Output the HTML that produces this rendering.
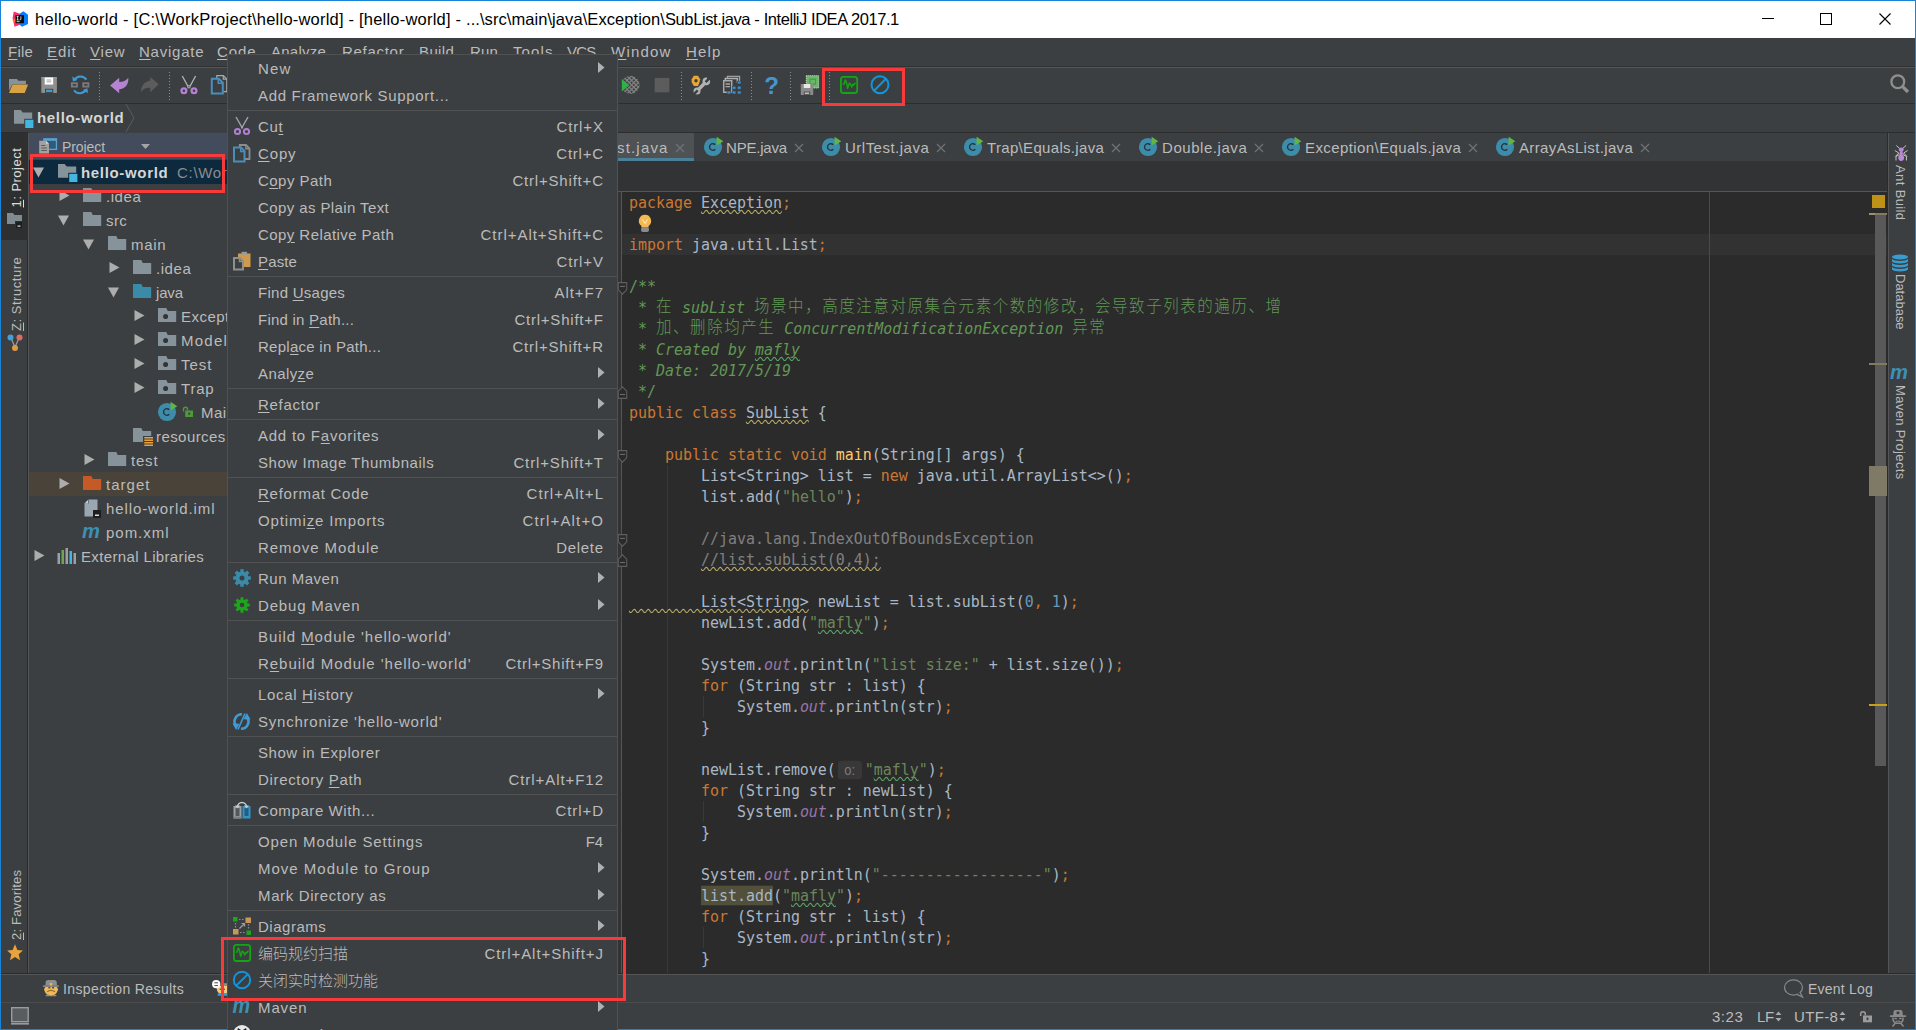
<!DOCTYPE html>
<html lang="zh"><head><meta charset="utf-8"><title>hello-world - IntelliJ IDEA</title><style>
html,body{margin:0;padding:0;background:#3c3f41;overflow:hidden}
#root{position:relative;width:1916px;height:1030px;overflow:hidden;font-family:"Liberation Sans","Noto Sans CJK SC",sans-serif;font-size:15px;color:#bbbbbb}
.t{position:absolute;white-space:pre;font-size:15px;color:#bbbbbb}
.t u{text-decoration:underline;text-underline-offset:2px;text-decoration-thickness:1px}
.title{color:#000;font-size:16.5px}
.b{font-weight:bold;color:#d6d6d6}
.s14{font-size:14px}
.vt{font-size:13px}
.cl{position:absolute;left:11px;height:21px;line-height:21px;white-space:pre;transform:scaleY(1.09);transform-origin:0 15.67px;font-family:"DejaVu Sans Mono","Liberation Mono","Noto Sans CJK SC",monospace;font-size:14.95px;color:#a9b7c6}
.k{color:#cc7832} .s{color:#6a8759} .c{color:#808080} .d{color:#629755} .i{font-style:italic} .n{color:#6897bb} .f{color:#9876aa;font-style:italic} .m{color:#ffc66d}
.z{color:#629755;font-family:"Noto Sans CJK SC",sans-serif;font-size:15.5px;letter-spacing:1.55px;line-height:0;font-weight:300;position:relative;top:-1px}
.w{text-decoration:underline wavy;text-decoration-thickness:1.2px;text-underline-offset:0.5px;text-decoration-skip-ink:none}
.hint{display:inline-block;background:#383838;color:#7a7a7a;font-family:"Liberation Sans","Noto Sans CJK SC",sans-serif;font-size:13px;height:17px;line-height:17px;padding:0 6.5px;margin:0 3px 0 2px;border-radius:3px;vertical-align:0px}
</style></head><body><div id="root">
<div style="position:absolute;left:0px;top:0px;width:1916px;height:1030px;background:#1883d7;"></div>
<div style="position:absolute;left:1px;top:1px;width:1914px;height:37px;background:#ffffff;"></div>
<svg style="position:absolute;left:11px;top:10px" width="18" height="18" viewBox="11 10 18 18"><path d="M13.800 11.600L20.600 14L20.600 24.500L14.500 26.700L12.600 18Z" fill="#fc2d6f"/><path d="M23.400 11.300L28 14.800L28 24.100L22.100 26.700L19.900 25L19.900 13.500Z" fill="#087cfa"/><path d="M12.200 20.400L15.700 18.300L15.700 22.700Z" fill="#fc801d"/><rect x="15.500" y="15.100" width="8.500" height="8.100" fill="#0a0a0a"/><path d="M16.700 16.300h1.900M17.650 16.300v3.600M16.700 19.900h1.900" stroke="#fff" stroke-width="0.800" fill="none"/><path d="M20.900 16.300v2.700q0 1-1.300 0.900" stroke="#fff" stroke-width="0.800" fill="none"/><rect x="16.600" y="21.300" width="3" height="0.800" fill="#fff"/></svg>
<span class="t title" style="top:7.5px;height:22px;line-height:22px;left:35px;letter-spacing:0.307px;">hello-world - </span>
<span class="t title" style="top:7.5px;height:22px;line-height:22px;left:133.6px;letter-spacing:0.215px;">[C:\WorkProject\hello-world] - </span>
<span class="t title" style="top:7.5px;height:22px;line-height:22px;left:359px;letter-spacing:0.218px;">[hello-world] - </span>
<span class="t title" style="top:7.5px;height:22px;line-height:22px;left:466px;letter-spacing:0.066px;">...\src\main\java\Exception\</span>
<span class="t title" style="top:7.5px;height:22px;line-height:22px;left:665px;letter-spacing:-0.404px;">SubList.java - </span>
<span class="t title" style="top:7.5px;height:22px;line-height:22px;left:763.7px;letter-spacing:-0.447px;">IntelliJ IDEA 2017.1</span>
<svg style="position:absolute;left:1740px;top:1px" width="175" height="37" viewBox="0 0 175 37"><path d="M22 17.5h12" stroke="#000" stroke-width="1" fill="none"/><rect x="80.5" y="12.5" width="11" height="11" stroke="#000" stroke-width="1" fill="none"/><path d="M139.5 12.5l11 11M150.5 12.5l-11 11" stroke="#000" stroke-width="1.1" fill="none"/></svg>
<div style="position:absolute;left:1px;top:38px;width:1914px;height:991px;background:#3c3f41;"></div>
<span class="t " style="top:42.0px;height:20px;line-height:20px;left:8px;letter-spacing:0.232px;"><u>F</u>ile</span>
<span class="t " style="top:42.0px;height:20px;line-height:20px;left:47px;letter-spacing:0.897px;"><u>E</u>dit</span>
<span class="t " style="top:42.0px;height:20px;line-height:20px;left:90px;letter-spacing:0.786px;"><u>V</u>iew</span>
<span class="t " style="top:42.0px;height:20px;line-height:20px;left:139px;letter-spacing:0.771px;"><u>N</u>avigate</span>
<span class="t " style="top:42.0px;height:20px;line-height:20px;left:217px;letter-spacing:0.893px;"><u>C</u>ode</span>
<span class="t " style="top:42.0px;height:20px;line-height:20px;left:271px;letter-spacing:0.250px;">Analy<u>z</u>e</span>
<span class="t " style="top:42.0px;height:20px;line-height:20px;left:342px;letter-spacing:0.706px;"><u>R</u>efactor</span>
<span class="t " style="top:42.0px;height:20px;line-height:20px;left:419px;letter-spacing:0.361px;"><u>B</u>uild</span>
<span class="t " style="top:42.0px;height:20px;line-height:20px;left:470px;letter-spacing:0.188px;">R<u>u</u>n</span>
<span class="t " style="top:42.0px;height:20px;line-height:20px;left:513px;letter-spacing:1.104px;"><u>T</u>ools</span>
<span class="t " style="top:42.0px;height:20px;line-height:20px;left:567px;letter-spacing:-0.744px;">VC<u>S</u></span>
<span class="t " style="top:42.0px;height:20px;line-height:20px;left:611px;letter-spacing:1.205px;"><u>W</u>indow</span>
<span class="t " style="top:42.0px;height:20px;line-height:20px;left:686px;letter-spacing:1.179px;"><u>H</u>elp</span>
<div style="position:absolute;left:1px;top:66px;width:1914px;height:1px;background:#323232;"></div>
<div style="position:absolute;left:1px;top:67px;width:1914px;height:1px;background:#555555;"></div>
<svg style="position:absolute;left:8px;top:74px" width="22" height="22" viewBox="8 74 22 22"><path d="M9 79h8.100l1.100 1.800h7.700v3.500h-13.600l-3.300 6.500z" fill="#87939a"/><path d="M12.500 84.600h15.600l-3.400 8.400h-15.700z" fill="#d9a343"/></svg>
<svg style="position:absolute;left:38px;top:74px" width="22" height="22" viewBox="38 74 22 22"><rect x="41.300" y="77.300" width="15.600" height="15.600" fill="#8f8f8f"/><rect x="41.300" y="77.300" width="15.600" height="1" fill="#a5a5a5"/><rect x="44.700" y="77.500" width="8.500" height="7.100" fill="#ffffff"/><path d="M46.600 80h4.600M46.600 81.800h4.600" stroke="#9a9a9a" stroke-width="0.900"/><rect x="45" y="88.800" width="8.200" height="4.100" fill="#3c3f41"/><rect x="45.900" y="89.600" width="6.400" height="2.500" fill="#3f9ad6"/></svg>
<svg style="position:absolute;left:68px;top:73px" width="24" height="24" viewBox="68 73 24 24"><path d="M74.200 80.200a7.200 7.200 0 0 1 12.200 -0.600" stroke="#3f9ad6" stroke-width="2" fill="none"/><path d="M86.200 89.600a7.200 7.200 0 0 1 -12.200 0.600" stroke="#3f9ad6" stroke-width="2" fill="none"/><path d="M72.300 76.500l0.600 5l4.600-1.600z" fill="#3f9ad6"/><path d="M88 93.300l-0.600-5l-4.600 1.600z" fill="#3f9ad6"/><rect x="70.900" y="82.300" width="7" height="5.200" fill="#7b7b7b"/><rect x="82.300" y="82.300" width="7" height="5.200" fill="#7b7b7b"/><rect x="72.800" y="84.100" width="3.300" height="1.600" fill="#3c3f41"/><rect x="84.200" y="84.100" width="3.300" height="1.600" fill="#3c3f41"/></svg>
<div style="position:absolute;left:99px;top:72px;width:1px;height:28px;background:repeating-linear-gradient(to bottom,#8d8d8d 0,#8d8d8d 1px,transparent 1px,transparent 3px)"></div>
<svg style="position:absolute;left:108px;top:74px" width="24" height="22" viewBox="108 74 24 22"><path d="M110.100 85.500L119.200 77.700L119.200 82.100C123 82 126.500 80.500 128.300 77.700C128.900 84.200 125 89 119.200 89.300L119.200 93.300Z" fill="#b584d1"/></svg>
<svg style="position:absolute;left:138px;top:74px" width="24" height="22" viewBox="138 74 24 22"><path d="M158.700 84.200L150.300 77L150.300 80.800C145 81 141 85.500 140.900 92.200C143 88.800 146 87.600 150.300 87.800L150.300 92.300Z" fill="#5c5c5c"/></svg>
<div style="position:absolute;left:169px;top:72px;width:1px;height:28px;background:repeating-linear-gradient(to bottom,#8d8d8d 0,#8d8d8d 1px,transparent 1px,transparent 3px)"></div>
<svg style="position:absolute;left:178px;top:73px" width="24" height="24" viewBox="178 73 24 24"><path d="M182.300 76l6 11M195.600 76l-6 11" stroke="#b4b4b4" stroke-width="1.300" fill="none"/><rect x="187.500" y="85.300" width="2.800" height="3" fill="#b4b4b4"/><rect x="188.300" y="86.200" width="1.200" height="1.200" fill="#3c3f41"/><circle cx="183.900" cy="90.700" r="2.400" fill="none" stroke="#b77fd6" stroke-width="2.300"/><circle cx="194" cy="90.700" r="2.400" fill="none" stroke="#b77fd6" stroke-width="2.300"/></svg>
<svg style="position:absolute;left:208px;top:73px" width="22" height="24" viewBox="208 73 22 24"><path d="M216.800 75.600h6.500l3.500 3.500v12.600h-10z" fill="#3c3f41" stroke="#a8a8a8" stroke-width="1.200"/><path d="M223.300 75.600v3.500h3.500" fill="none" stroke="#a8a8a8" stroke-width="1.200"/><path d="M211.800 78.700h7l4 4v10.800h-11z" fill="#3c3f41" stroke="#4a8ebd" stroke-width="2"/><path d="M218.300 78.700v4.500h4.500" fill="none" stroke="#4a8ebd" stroke-width="1.500"/></svg>
<svg style="position:absolute;left:620px;top:73px" width="22" height="24" viewBox="620 73 22 24"><defs><pattern id="hx" width="3.200" height="3.200" patternUnits="userSpaceOnUse" patternTransform="rotate(45 630 85)"><path d="M0 0.600h3.200M0.600 0v3.200" stroke="#858585" stroke-width="1.200"/></pattern></defs><circle cx="630.600" cy="84.900" r="9.100" fill="url(#hx)"/><path d="M621 78.200l9.800 7l-9.800 7z" fill="#3c3f41"/><path d="M621.800 79l7.700 6.200l-7.700 6.200z" fill="#2fb04a"/></svg>
<svg style="position:absolute;left:652px;top:74px" width="22" height="22" viewBox="652 74 22 22"><rect x="654.700" y="77.900" width="14.600" height="14.400" fill="#5c5c5c"/></svg>
<div style="position:absolute;left:681px;top:72px;width:1px;height:28px;background:repeating-linear-gradient(to bottom,#8d8d8d 0,#8d8d8d 1px,transparent 1px,transparent 3px)"></div>
<svg style="position:absolute;left:690px;top:73px" width="22" height="24" viewBox="690 73 22 24"><path d="M697.200 90.800l9-9" stroke="#b2b2b2" stroke-width="3.400" fill="none"/><circle cx="706.300" cy="81.400" r="3.800" fill="#b2b2b2"/><path d="M706.300 81.400l1.300-1.300l3.500 0l0-3.500l-3.500 0z" fill="#3c3f41" transform="rotate(0 706.300 81.400)"/><path d="M705.600 82.100l5.500-5.500" stroke="#3c3f41" stroke-width="2.600"/><circle cx="697" cy="91" r="3.500" fill="#b2b2b2"/><path d="M697.700 90.300l-5.500 5.500" stroke="#3c3f41" stroke-width="2.400"/><path d="M693.800 75.700h4.200l2.100 3.600l-0.700 3.500l-1.400 3.100h-4.200l-2.100-3.600l0-3z" fill="#e8a634"/><circle cx="696" cy="80.800" r="1.700" fill="#3c3f41"/></svg>
<svg style="position:absolute;left:721px;top:73px" width="22" height="24" viewBox="721 73 22 24"><path d="M727.500 78v-1.600h12v6" fill="none" stroke="#a0a0a0" stroke-width="1.400"/><path d="M725.300 80v-1.500h12v4" fill="none" stroke="#b0b0b0" stroke-width="1.400"/><path d="M723.700 80.700h8v11.600h-8z" fill="#3c3f41" stroke="#a8a8a8" stroke-width="1.500"/><path d="M725.500 84h4.500M725.500 86.600h4.500" stroke="#a8a8a8" stroke-width="1.300"/><g fill="#3592d6" stroke="#3c3f41" stroke-width="0.600"><rect x="737.300" y="81.100" width="3.700" height="2.800"/><rect x="732.200" y="86.200" width="3.700" height="3"/><rect x="737.300" y="86.200" width="3.700" height="3"/><rect x="727.100" y="91" width="3.700" height="3"/><rect x="732.200" y="91" width="3.700" height="3"/><rect x="737.300" y="91" width="3.700" height="3"/></g></svg>
<div style="position:absolute;left:751px;top:72px;width:1px;height:28px;background:repeating-linear-gradient(to bottom,#8d8d8d 0,#8d8d8d 1px,transparent 1px,transparent 3px)"></div>
<svg style="position:absolute;left:760px;top:72px" width="22" height="26" viewBox="760 72 22 26"><text x="771.600" y="94.100" text-anchor="middle" font-family="Liberation Sans,sans-serif" font-weight="bold" font-size="24" fill="#4596cf">?</text></svg>
<div style="position:absolute;left:790px;top:72px;width:1px;height:28px;background:repeating-linear-gradient(to bottom,#8d8d8d 0,#8d8d8d 1px,transparent 1px,transparent 3px)"></div>
<svg style="position:absolute;left:799px;top:73px" width="22" height="24" viewBox="799 73 22 24"><rect x="806.300" y="75.700" width="12.300" height="12.300" fill="#6ab868" stroke="#d8e8d0" stroke-width="1" stroke-dasharray="1 1"/><rect x="810" y="79.200" width="5.500" height="5" fill="none" stroke="#4a9a4a" stroke-width="1.200"/><rect x="800.800" y="84" width="12.400" height="11" fill="#8a8a8a"/><rect x="803.800" y="84" width="6.500" height="4" fill="#e8e8e8"/><rect x="803.800" y="91.500" width="6.500" height="3.500" fill="#5a5a5a"/><rect x="805" y="92.600" width="4" height="1.300" fill="#d0d0d0"/></svg>
<div style="position:absolute;left:829px;top:72px;width:1px;height:28px;background:repeating-linear-gradient(to bottom,#8d8d8d 0,#8d8d8d 1px,transparent 1px,transparent 3px)"></div>
<svg style="position:absolute;left:838px;top:74px" width="22" height="22" viewBox="838 74 22 22"><rect x="840.900" y="76.900" width="16.300" height="16.100" rx="2.600" fill="none" stroke="#14a514" stroke-width="1.800"/><path d="M842.800 84.200l1.300-0.200l1.100-4l1.100 1.800l1.400 6.600l1.600-5.300l1.200 1.200l1.200 2.700l1-2.400l1.200 0.300l0.800-1.500h1" fill="none" stroke="#14a514" stroke-width="1.500" stroke-linejoin="round"/></svg>
<svg style="position:absolute;left:868px;top:73px" width="24" height="24" viewBox="868 73 24 24"><circle cx="880" cy="84.800" r="8.500" fill="none" stroke="#1296db" stroke-width="2"/><path d="M874 90.800l12-12" stroke="#1296db" stroke-width="2"/></svg>
<svg style="position:absolute;left:1886px;top:70px" width="26" height="26" viewBox="1886 70 26 26"><circle cx="1897.800" cy="81.700" r="6.400" fill="none" stroke="#8f8f8f" stroke-width="2.300"/><path d="M1902.600 86.600l5.400 5.400" stroke="#8f8f8f" stroke-width="3.200" stroke-linecap="butt"/></svg>
<div style="position:absolute;left:1px;top:103px;width:1914px;height:1px;background:#2d2d2d;"></div>
<div style="position:absolute;left:822px;top:68px;width:77px;height:32px;border:3px solid #f93a3a"></div>
<svg style="position:absolute;left:14px;top:110px" width="20" height="18" viewBox="0 0 20 18"><path d="M0 0h6.700l2 2.400h9.500v11.400h-18.200z" fill="#87939a"/><rect x="10.200" y="8.800" width="9.800" height="9.200" fill="#3c3f41"/><rect x="11.200" y="9.800" width="8.200" height="8.200" fill="#40b6e0"/></svg>
<span class="t b" style="top:108.0px;height:20px;line-height:20px;left:37px;letter-spacing:0.667px;">hello-world</span>
<svg style="position:absolute;left:125px;top:104px" width="12" height="28" viewBox="0 0 12 28"><path d="M1 0l8 14l-8 14" stroke="#5a5d5f" fill="none" stroke-width="1"/></svg>
<div style="position:absolute;left:1px;top:132px;width:1914px;height:1px;background:#2d2d2d;"></div>
<div style="position:absolute;left:1px;top:133px;width:27px;height:842px;background:#3c3f41;"></div>
<div style="position:absolute;left:27px;top:133px;width:1px;height:841px;background:#2b2b2b;"></div>
<div style="position:absolute;left:28px;top:133px;width:1px;height:841px;background:#555555;"></div>
<div style="position:absolute;left:1px;top:133px;width:27px;height:107px;background:#2d2f30;"></div>
<span class="t vt" style="left:7px;top:147.5px;height:20px;line-height:20px;transform:rotate(-90deg) translate(-59.5px,0);transform-origin:0 0;color:#dddddd;letter-spacing:0.482px;"><u>1</u>: Project</span>
<svg style="position:absolute;left:7px;top:212px" width="16" height="16" viewBox="0 0 16 16"><path d="M0 1h6l1.5 2h7.5v9h-15z" fill="#7f8b91"/><rect x="8" y="9" width="7" height="7" fill="#2d2f30"/><rect x="9" y="10" width="6" height="6" fill="#1e1e1e"/><rect x="10.5" y="13.5" width="3" height="1.2" fill="#ddd"/></svg>
<span class="t vt" style="left:7px;top:257px;height:20px;line-height:20px;transform:rotate(-90deg) translate(-74px,0);transform-origin:0 0;color:#bbbbbb;letter-spacing:0.529px;"><u>Z</u>: Structure</span>
<svg style="position:absolute;left:7px;top:334px" width="16" height="18" viewBox="0 0 16 18"><path d="M4 4l3.5 8M12 4l-3.5 8" stroke="#9aa0a4" stroke-width="1.2"/><circle cx="3.5" cy="3.5" r="3" fill="#40a0d8"/><circle cx="12.5" cy="3.5" r="3" fill="#e06c60"/><circle cx="8" cy="14" r="3" fill="#e09a40"/></svg>
<span class="t vt" style="left:7px;top:870px;height:20px;line-height:20px;transform:rotate(-90deg) translate(-70px,0);transform-origin:0 0;color:#bbbbbb;letter-spacing:0.181px;"><u>2</u>: Favorites</span>
<svg style="position:absolute;left:7px;top:944px" width="16" height="17" viewBox="0 0 16 17"><path d="M8 0.300l2.400 5.600l5.500 0.500l-4.200 3.900l1.300 5.900l-5-3.200l-5 3.200l1.300-5.900l-4.200-3.900l5.500-0.500z" fill="#e8a33d"/></svg>
<div style="position:absolute;left:29px;top:132px;width:199px;height:1px;background:#3e4143;"></div>
<div style="position:absolute;left:29px;top:133px;width:199px;height:26px;background:#434c5c;"></div>
<div style="position:absolute;left:29px;top:159px;width:199px;height:1px;background:#35404d;"></div>
<svg style="position:absolute;left:39px;top:138px" width="19" height="16" viewBox="0 0 19 16"><rect x="4.200" y="0.200" width="13.900" height="11.800" fill="#5ba3d0"/><rect x="5.500" y="2.800" width="11.300" height="7.900" fill="#2f5a78"/><path d="M0.200 2.800h6.800l3 3v9.600h-9.800z" fill="#a2a2a2"/><path d="M7 2.800v3h3z" fill="#d0d0d0"/><path d="M2.300 7.500h4M2.300 10h5.500M2.300 12.500h5.500" stroke="#5a5a5a" stroke-width="1.100"/></svg>
<span class="t s14" style="top:137.0px;height:20px;line-height:20px;left:62px;letter-spacing:-0.089px;">Project</span>
<svg style="position:absolute;left:141px;top:144px" width="10" height="6"><path d="M0 0h9l-4.5 5z" fill="#a5a5a5"/></svg>
<div style="position:absolute;left:29px;top:160px;width:199px;height:813px;background:#3c3f41;"></div>
<div style="position:absolute;left:29px;top:157px;width:198px;height:818px;overflow:hidden">
<div style="position:absolute;left:0px;top:3px;width:199px;height:24px;background:#0d293e;"></div>
<svg style="position:absolute;left:4px;top:10px" width="12" height="11"><path d="M0 0.5h11l-5.5 10z" fill="#adadad"/></svg>
<svg style="position:absolute;left:29px;top:7px" width="20" height="18" viewBox="0 0 20 18"><path d="M0 0h6.700l2 2.400h9.500v11.400h-18.200z" fill="#87939a"/><rect x="10.200" y="8.800" width="9.800" height="9.200" fill="#0d293e"/><rect x="11.200" y="9.800" width="8.200" height="8.200" fill="#40b6e0"/></svg>
<span class="t b" style="left:52px;top:6px;height:20px;line-height:20px;letter-spacing:0.667px;">hello-world</span>
<span class="t" style="left:148px;top:6px;height:20px;line-height:20px;color:#8c8c8c;letter-spacing:0.695px;">C:\WorkProject\hello-world</span>
<svg style="position:absolute;left:30px;top:33px" width="11" height="12"><path d="M0.5 0v11l10-5.5z" fill="#adadad"/></svg>
<svg style="position:absolute;left:54px;top:31px" width="19" height="15" viewBox="0 0 19 15"><path d="M0 0h8.300l1.400 3h8.500v11h-18.200z" fill="#87939a"/></svg>
<span class="t " style="left:77px;top:30px;height:20px;line-height:20px;letter-spacing:0.549px;">.idea</span>
<svg style="position:absolute;left:29px;top:58px" width="12" height="11"><path d="M0 0.5h11l-5.5 10z" fill="#adadad"/></svg>
<svg style="position:absolute;left:54px;top:55px" width="19" height="15" viewBox="0 0 19 15"><path d="M0 0h8.300l1.400 3h8.500v11h-18.200z" fill="#87939a"/></svg>
<span class="t " style="left:77px;top:54px;height:20px;line-height:20px;letter-spacing:0.400px;">src</span>
<svg style="position:absolute;left:54px;top:82px" width="12" height="11"><path d="M0 0.5h11l-5.5 10z" fill="#adadad"/></svg>
<svg style="position:absolute;left:79px;top:79px" width="19" height="15" viewBox="0 0 19 15"><path d="M0 0h8.300l1.400 3h8.500v11h-18.200z" fill="#87939a"/></svg>
<span class="t " style="left:102px;top:78px;height:20px;line-height:20px;letter-spacing:0.710px;">main</span>
<svg style="position:absolute;left:80px;top:105px" width="11" height="12"><path d="M0.5 0v11l10-5.5z" fill="#adadad"/></svg>
<svg style="position:absolute;left:104px;top:103px" width="19" height="15" viewBox="0 0 19 15"><path d="M0 0h8.300l1.400 3h8.500v11h-18.200z" fill="#87939a"/></svg>
<span class="t " style="left:127px;top:102px;height:20px;line-height:20px;letter-spacing:0.549px;">.idea</span>
<svg style="position:absolute;left:79px;top:130px" width="12" height="11"><path d="M0 0.5h11l-5.5 10z" fill="#adadad"/></svg>
<svg style="position:absolute;left:104px;top:127px" width="19" height="15" viewBox="0 0 19 15"><path d="M0 0h8.300l1.400 3h8.500v11h-18.200z" fill="#3a8ba8"/></svg>
<span class="t " style="left:127px;top:126px;height:20px;line-height:20px;letter-spacing:-0.152px;">java</span>
<svg style="position:absolute;left:105px;top:153px" width="11" height="12"><path d="M0.5 0v11l10-5.5z" fill="#adadad"/></svg>
<svg style="position:absolute;left:129px;top:151px" width="19" height="15" viewBox="0 0 19 15"><path d="M0 0h8.300l1.400 3h8.500v11h-18.200z" fill="#87939a"/><circle cx="7.600" cy="8.400" r="2.500" fill="#313435"/></svg>
<span class="t " style="left:152px;top:150px;height:20px;line-height:20px;letter-spacing:0.485px;">Exception</span>
<svg style="position:absolute;left:105px;top:177px" width="11" height="12"><path d="M0.5 0v11l10-5.5z" fill="#adadad"/></svg>
<svg style="position:absolute;left:129px;top:175px" width="19" height="15" viewBox="0 0 19 15"><path d="M0 0h8.300l1.400 3h8.500v11h-18.200z" fill="#87939a"/><circle cx="7.600" cy="8.400" r="2.500" fill="#313435"/></svg>
<span class="t " style="left:152px;top:174px;height:20px;line-height:20px;letter-spacing:1.253px;">Model</span>
<svg style="position:absolute;left:105px;top:201px" width="11" height="12"><path d="M0.5 0v11l10-5.5z" fill="#adadad"/></svg>
<svg style="position:absolute;left:129px;top:199px" width="19" height="15" viewBox="0 0 19 15"><path d="M0 0h8.300l1.400 3h8.500v11h-18.200z" fill="#87939a"/><circle cx="7.600" cy="8.400" r="2.500" fill="#313435"/></svg>
<span class="t " style="left:152px;top:198px;height:20px;line-height:20px;letter-spacing:0.996px;">Test</span>
<svg style="position:absolute;left:105px;top:225px" width="11" height="12"><path d="M0.5 0v11l10-5.5z" fill="#adadad"/></svg>
<svg style="position:absolute;left:129px;top:223px" width="19" height="15" viewBox="0 0 19 15"><path d="M0 0h8.300l1.400 3h8.500v11h-18.200z" fill="#87939a"/><circle cx="7.600" cy="8.400" r="2.500" fill="#313435"/></svg>
<span class="t " style="left:152px;top:222px;height:20px;line-height:20px;letter-spacing:0.772px;">Trap</span>
<svg style="position:absolute;left:128px;top:244px" width="21" height="21" viewBox="0 0 21 21"><circle cx="10" cy="11" r="9.100" fill="#3d8daa"/><path d="M12.300 8.800a3.300 3.300 0 1 0 0 4.400" fill="none" stroke="#22353f" stroke-width="1.350"/><path d="M13.600 0.800l0 8.700l6.700-4.200z" fill="#62b543"/></svg>
<svg style="position:absolute;left:153px;top:249px" width="12" height="12" viewBox="0 0 12 12"><path d="M1.500 5.500v-2.300a2 2 0 0 1 4 0v1.300" fill="none" stroke="#4e9a3b" stroke-width="1.400"/><rect x="3.200" y="4.500" width="7.800" height="6.500" fill="#4e9a3b"/><rect x="6.300" y="6.600" width="1.800" height="2.200" fill="#3c3f41"/></svg>
<span class="t " style="left:172px;top:246px;height:20px;line-height:20px;letter-spacing:0.424px;">Main</span>
<svg style="position:absolute;left:104px;top:271px" width="20" height="19" viewBox="0 0 20 19"><path d="M0 0h8.300l1.400 3h8.500v11h-18.200z" fill="#87939a"/><rect x="10" y="8" width="10" height="11" fill="#3c3f41"/><path d="M11.300 9.800h8.700M11.300 12.300h8.700M11.300 14.800h8.700M11.300 17.300h8.700" stroke="#e8a33d" stroke-width="1.400"/></svg>
<span class="t " style="left:127px;top:270px;height:20px;line-height:20px;letter-spacing:0.428px;">resources</span>
<svg style="position:absolute;left:55px;top:297px" width="11" height="12"><path d="M0.5 0v11l10-5.5z" fill="#adadad"/></svg>
<svg style="position:absolute;left:79px;top:295px" width="19" height="15" viewBox="0 0 19 15"><path d="M0 0h8.300l1.400 3h8.500v11h-18.200z" fill="#87939a"/></svg>
<span class="t " style="left:102px;top:294px;height:20px;line-height:20px;letter-spacing:0.804px;">test</span>
<div style="position:absolute;left:0px;top:315px;width:199px;height:24px;background:#4a4339;"></div>
<svg style="position:absolute;left:30px;top:321px" width="11" height="12"><path d="M0.5 0v11l10-5.5z" fill="#adadad"/></svg>
<svg style="position:absolute;left:54px;top:319px" width="19" height="15" viewBox="0 0 19 15"><path d="M0 0h8.300l1.400 3h8.500v11h-18.200z" fill="#c55a26"/></svg>
<span class="t " style="left:77px;top:318px;height:20px;line-height:20px;letter-spacing:1.026px;">target</span>
<svg style="position:absolute;left:54px;top:342px" width="19" height="19" viewBox="0 0 19 19"><path d="M5.5 0.5h9v17h-13v-13z" fill="#9aa7b0"/><path d="M5.5 0.5v4h-4z" fill="#3c3f41"/><path d="M5 1l-3.5 3.5h3.5z" fill="#c8ced2"/><rect x="10" y="11" width="8" height="8" fill="#1e1e1e"/><rect x="12" y="15.5" width="4" height="1.5" fill="#ddd"/></svg>
<span class="t " style="left:77px;top:342px;height:20px;line-height:20px;letter-spacing:0.906px;">hello-world.iml</span>
<svg style="position:absolute;left:53px;top:366px" width="19" height="18" viewBox="0 0 19 18"><text x="0" y="15" font-family="Liberation Sans,sans-serif" font-style="italic" font-weight="bold" font-size="21" fill="#3d8fb5" textLength="18" lengthAdjust="spacingAndGlyphs">m</text></svg>
<span class="t " style="left:77px;top:366px;height:20px;line-height:20px;letter-spacing:0.971px;">pom.xml</span>
<svg style="position:absolute;left:5px;top:393px" width="11" height="12"><path d="M0.5 0v11l10-5.5z" fill="#adadad"/></svg>
<svg style="position:absolute;left:28px;top:390px" width="20" height="18" viewBox="0 0 20 18"><rect x="0.5" y="6" width="2.5" height="11" fill="#9aa0a4"/><rect x="4.5" y="3" width="2.5" height="14" fill="#6aa84f"/><rect x="8.5" y="1" width="2.5" height="16" fill="#9aa0a4"/><rect x="12.5" y="4" width="2.5" height="13" fill="#40b6e0"/><rect x="16.5" y="6" width="2.5" height="11" fill="#9aa0a4"/></svg>
<span class="t " style="left:52px;top:390px;height:20px;line-height:20px;letter-spacing:0.359px;">External Libraries</span>
</div>
<div style="position:absolute;left:30px;top:154px;width:189px;height:33px;border:3px solid #f93a3a"></div>
<div style="position:absolute;left:618px;top:133px;width:1270px;height:28px;background:#3c3f41;"></div>
<div style="position:absolute;left:618px;top:133px;width:76px;height:28px;background:#4e5254;"></div>
<div style="position:absolute;left:618px;top:158px;width:76px;height:3px;background:#4a8199;"></div>
<span class="t " style="top:138.0px;height:20px;line-height:20px;left:603px;letter-spacing:1.173px;">List.java</span>
<svg style="position:absolute;left:675px;top:143px" width="10" height="10"><path d="M1 1l8 8M9 1l-8 8" stroke="#6f7375" stroke-width="1.200" fill="none"/></svg>
<svg style="position:absolute;left:703px;top:136px" width="21" height="21" viewBox="0 0 21 21"><circle cx="10" cy="11" r="9.100" fill="#3d8daa"/><path d="M12.300 8.800a3.300 3.300 0 1 0 0 4.400" fill="none" stroke="#22353f" stroke-width="1.350"/><path d="M13.600 0.800l0 8.700l6.700-4.200z" fill="#62b543"/></svg>
<span class="t " style="top:138.0px;height:20px;line-height:20px;left:726px;letter-spacing:-0.204px;">NPE.java</span>
<svg style="position:absolute;left:794px;top:143px" width="10" height="10"><path d="M1 1l8 8M9 1l-8 8" stroke="#6f7375" stroke-width="1.200" fill="none"/></svg>
<svg style="position:absolute;left:821px;top:136px" width="21" height="21" viewBox="0 0 21 21"><circle cx="10" cy="11" r="9.100" fill="#3d8daa"/><path d="M12.300 8.800a3.300 3.300 0 1 0 0 4.400" fill="none" stroke="#22353f" stroke-width="1.350"/><path d="M13.600 0.800l0 8.700l6.700-4.200z" fill="#62b543"/></svg>
<span class="t " style="top:138.0px;height:20px;line-height:20px;left:845px;letter-spacing:0.490px;">UrlTest.java</span>
<svg style="position:absolute;left:936px;top:143px" width="10" height="10"><path d="M1 1l8 8M9 1l-8 8" stroke="#6f7375" stroke-width="1.200" fill="none"/></svg>
<svg style="position:absolute;left:963px;top:136px" width="21" height="21" viewBox="0 0 21 21"><circle cx="10" cy="11" r="9.100" fill="#3d8daa"/><path d="M12.300 8.800a3.300 3.300 0 1 0 0 4.400" fill="none" stroke="#22353f" stroke-width="1.350"/><path d="M13.600 0.800l0 8.700l6.700-4.200z" fill="#62b543"/></svg>
<span class="t " style="top:138.0px;height:20px;line-height:20px;left:987px;letter-spacing:0.322px;">Trap\Equals.java</span>
<svg style="position:absolute;left:1111px;top:143px" width="10" height="10"><path d="M1 1l8 8M9 1l-8 8" stroke="#6f7375" stroke-width="1.200" fill="none"/></svg>
<svg style="position:absolute;left:1138px;top:136px" width="21" height="21" viewBox="0 0 21 21"><circle cx="10" cy="11" r="9.100" fill="#3d8daa"/><path d="M12.300 8.800a3.300 3.300 0 1 0 0 4.400" fill="none" stroke="#22353f" stroke-width="1.350"/><path d="M13.600 0.800l0 8.700l6.700-4.200z" fill="#62b543"/></svg>
<span class="t " style="top:138.0px;height:20px;line-height:20px;left:1162px;letter-spacing:0.551px;">Double.java</span>
<svg style="position:absolute;left:1254px;top:143px" width="10" height="10"><path d="M1 1l8 8M9 1l-8 8" stroke="#6f7375" stroke-width="1.200" fill="none"/></svg>
<svg style="position:absolute;left:1281px;top:136px" width="21" height="21" viewBox="0 0 21 21"><circle cx="10" cy="11" r="9.100" fill="#3d8daa"/><path d="M12.300 8.800a3.300 3.300 0 1 0 0 4.400" fill="none" stroke="#22353f" stroke-width="1.350"/><path d="M13.600 0.800l0 8.700l6.700-4.200z" fill="#62b543"/></svg>
<span class="t " style="top:138.0px;height:20px;line-height:20px;left:1305px;letter-spacing:0.410px;">Exception\Equals.java</span>
<svg style="position:absolute;left:1468px;top:143px" width="10" height="10"><path d="M1 1l8 8M9 1l-8 8" stroke="#6f7375" stroke-width="1.200" fill="none"/></svg>
<svg style="position:absolute;left:1495px;top:136px" width="21" height="21" viewBox="0 0 21 21"><circle cx="10" cy="11" r="9.100" fill="#3d8daa"/><path d="M12.300 8.800a3.300 3.300 0 1 0 0 4.400" fill="none" stroke="#22353f" stroke-width="1.350"/><path d="M13.600 0.800l0 8.700l6.700-4.200z" fill="#62b543"/></svg>
<span class="t " style="top:138.0px;height:20px;line-height:20px;left:1519px;letter-spacing:0.363px;">ArrayAsList.java</span>
<svg style="position:absolute;left:1640px;top:143px" width="10" height="10"><path d="M1 1l8 8M9 1l-8 8" stroke="#6f7375" stroke-width="1.200" fill="none"/></svg>
<div style="position:absolute;left:618px;top:161px;width:1270px;height:30px;background:#313335;"></div>
<div style="position:absolute;left:618px;top:191px;width:1270px;height:1px;background:#555555;"></div>
<div style="position:absolute;left:618px;top:192px;width:1270px;height:782px;background:#2b2b2b;"></div>
<div style="position:absolute;left:618px;top:192px;width:4px;height:782px;background:#313335;"></div>
<div style="position:absolute;left:621px;top:192px;width:1px;height:782px;background:#555555;"></div>
<div style="position:absolute;left:622px;top:234px;width:1266px;height:21px;background:#323232;"></div>
<div style="position:absolute;left:1709px;top:192px;width:1px;height:782px;background:#4a4a4a;"></div>
<div style="position:absolute;left:667px;top:465px;width:1px;height:509px;background:#393939;"></div>
<div style="position:absolute;left:703px;top:696px;width:1px;height:21px;background:#393939;"></div>
<div style="position:absolute;left:703px;top:801px;width:1px;height:21px;background:#393939;"></div>
<div style="position:absolute;left:703px;top:927px;width:1px;height:21px;background:#393939;"></div>
<div style="position:absolute;left:1875px;top:215px;width:11px;height:551px;background:#595959;"></div>
<div style="position:absolute;left:1872px;top:195px;width:13px;height:13px;background:#be9117;"></div>
<div style="position:absolute;left:1869px;top:213px;width:18px;height:2px;background:#857a62;"></div>
<div style="position:absolute;left:1869px;top:213px;width:6px;height:2px;background:#a09070;"></div>
<div style="position:absolute;left:1869px;top:363px;width:18px;height:2px;background:#857a62;"></div>
<div style="position:absolute;left:1869px;top:466px;width:18px;height:30px;background:#7e7a65;"></div>
<div style="position:absolute;left:1869px;top:704px;width:18px;height:2px;background:#c9a01e;"></div>
<div style="position:absolute;left:618px;top:192px;width:1251px;height:782px;overflow:hidden">
<div class="cl" style="top:1px"><span class="k">package </span><span class="w" style="text-decoration-color:#b8ab68">Exception</span><span class="k">;</span></div>
<div class="cl" style="top:43px"><span class="k">import </span>java.util.List<span class="k">;</span></div>
<div class="cl" style="top:85px"><span class="d">/**</span></div>
<div class="cl" style="top:106px"><span class="d"> * </span><span class="z">在</span><span class="d"> </span><span class="d i">subList</span><span class="d"> </span><span class="z">场景中，高度注意对原集合元素个数的修改，会导致子列表的遍历、增</span></div>
<div class="cl" style="top:127px"><span class="d"> * </span><span class="z">加、删除均产生</span><span class="d"> </span><span class="d i">ConcurrentModificationException</span><span class="d"> </span><span class="z">异常</span></div>
<div class="cl" style="top:148px"><span class="d"> * </span><span class="d i">Created by </span><span class="d i w" style="text-decoration-color:#5aa566">mafly</span></div>
<div class="cl" style="top:169px"><span class="d"> * </span><span class="d i">Date: 2017/5/19</span></div>
<div class="cl" style="top:190px"><span class="d"> */</span></div>
<div class="cl" style="top:211px"><span class="k">public class </span><span class="w" style="text-decoration-color:#b8ab68">SubList</span> {</div>
<div class="cl" style="top:253px">    <span class="k">public static void </span><span class="m">main</span>(String[] args) {</div>
<div class="cl" style="top:274px">        List&lt;String&gt; list = <span class="k">new </span>java.util.ArrayList&lt;&gt;()<span class="k">;</span></div>
<div class="cl" style="top:295px">        list.add(<span class="s">&quot;hello&quot;</span>)<span class="k">;</span></div>
<div class="cl" style="top:337px">        <span class="c">//java.lang.IndexOutOfBoundsException</span></div>
<div class="cl" style="top:358px">        <span class="c w" style="text-decoration-color:#b8ab68">//list.subList(0,4);</span></div>
<div class="cl" style="top:400px"><span class="w" style="text-decoration-color:#b8ab68">        List&lt;String&gt;</span> newList = list.subList(<span class="n">0</span><span class="k">, </span><span class="n">1</span>)<span class="k">;</span></div>
<div class="cl" style="top:421px">        newList.add(<span class="s">&quot;</span><span class="s w" style="text-decoration-color:#5aa566">mafly</span><span class="s">&quot;</span>)<span class="k">;</span></div>
<div class="cl" style="top:463px">        System.<span class="f">out</span>.println(<span class="s">&quot;list size:&quot;</span> + list.size())<span class="k">;</span></div>
<div class="cl" style="top:484px">        <span class="k">for </span>(String str : list) {</div>
<div class="cl" style="top:505px">            System.<span class="f">out</span>.println(str)<span class="k">;</span></div>
<div class="cl" style="top:526px">        }</div>
<div class="cl" style="top:568px">        newList.remove(<span class="hint">o:</span><span class="s">&quot;</span><span class="s w" style="text-decoration-color:#5aa566">mafly</span><span class="s">&quot;</span>)<span class="k">;</span></div>
<div class="cl" style="top:589px">        <span class="k">for </span>(String str : newList) {</div>
<div class="cl" style="top:610px">            System.<span class="f">out</span>.println(str)<span class="k">;</span></div>
<div class="cl" style="top:631px">        }</div>
<div class="cl" style="top:673px">        System.<span class="f">out</span>.println(<span class="s">&quot;------------------&quot;</span>)<span class="k">;</span></div>
<div class="cl" style="top:694px">        <span style="background:#52503a">list.add</span>(<span class="s">&quot;</span><span class="s w" style="text-decoration-color:#5aa566">mafly</span><span class="s">&quot;</span>)<span class="k">;</span></div>
<div class="cl" style="top:715px">        <span class="k">for </span>(String str : list) {</div>
<div class="cl" style="top:736px">            System.<span class="f">out</span>.println(str)<span class="k">;</span></div>
<div class="cl" style="top:757px">        }</div>
<svg style="position:absolute;left:0px;top:90px" width="10" height="13"><path d="M0.300 0.600h8.400v7.200l-4.200 4.400l-4.200-4.400z" fill="#2b2b2b" stroke="#5e5e5e" stroke-width="1.100"/><path d="M2 4.400h5" stroke="#6a6a6a" stroke-width="1.100"/></svg>
<svg style="position:absolute;left:0px;top:193.5px" width="10" height="13"><path d="M0.300 12.400h8.400v-7.200l-4.200-4.400l-4.200 4.400z" fill="#2b2b2b" stroke="#5e5e5e" stroke-width="1.100"/><path d="M2 8.500h5" stroke="#6a6a6a" stroke-width="1.100"/></svg>
<svg style="position:absolute;left:0px;top:258px" width="10" height="13"><path d="M0.300 0.600h8.400v7.200l-4.200 4.400l-4.200-4.400z" fill="#2b2b2b" stroke="#5e5e5e" stroke-width="1.100"/><path d="M2 4.400h5" stroke="#6a6a6a" stroke-width="1.100"/></svg>
<svg style="position:absolute;left:0px;top:342px" width="10" height="13"><path d="M0.300 0.600h8.400v7.200l-4.200 4.400l-4.200-4.400z" fill="#2b2b2b" stroke="#5e5e5e" stroke-width="1.100"/><path d="M2 4.400h5" stroke="#6a6a6a" stroke-width="1.100"/></svg>
<svg style="position:absolute;left:0px;top:361.5px" width="10" height="13"><path d="M0.300 12.400h8.400v-7.200l-4.200-4.400l-4.200 4.400z" fill="#2b2b2b" stroke="#5e5e5e" stroke-width="1.100"/><path d="M2 8.500h5" stroke="#6a6a6a" stroke-width="1.100"/></svg>
</div>
<svg style="position:absolute;left:637px;top:214px" width="16" height="18" viewBox="0 0 16 18"><path d="M8 0.800a6.200 6.200 0 0 0-3.600 11.200v1.500h7.200v-1.500a6.200 6.200 0 0 0-3.600-11.200z" fill="#f3b953"/><path d="M5.500 5.500l2.500 4l2.500-4" stroke="#fde6b0" stroke-width="1.100" fill="none"/><rect x="4" y="13.300" width="8" height="4.700" rx="2" fill="#8a8d8f"/></svg>
<div style="position:absolute;left:1888px;top:133px;width:27px;height:841px;background:#3c3f41;"></div>
<div style="position:absolute;left:1887px;top:133px;width:1px;height:841px;background:#2b2b2b;"></div>
<div style="position:absolute;left:1888px;top:133px;width:1px;height:841px;background:#555555;"></div>
<svg style="position:absolute;left:1892px;top:143px" width="20" height="20" viewBox="1892 143 20 20"><g stroke="#c4c4c4" stroke-width="1" fill="none"><path d="M1896.300 145.500l3.400 3M1906.100 145.500l-3.400 3"/><path d="M1894.800 150.500l4 2.500l-3.500 3.500M1907.600 150.500l-4 2.500l3.500 3.500"/><path d="M1899.500 154.500l-3.500 2v4M1902.900 154.500l3.500 2v4"/></g><ellipse cx="1901.200" cy="149.600" rx="2.500" ry="2.200" fill="#b88bd4"/><ellipse cx="1901.200" cy="153.400" rx="1.700" ry="2.300" fill="#b88bd4"/><ellipse cx="1901.200" cy="157.800" rx="2.900" ry="3.100" fill="#b88bd4"/></svg>
<span class="t vt" style="left:1910px;top:165px;height:20px;line-height:20px;transform:rotate(90deg);transform-origin:0 0;color:#bbbbbb;letter-spacing:0.383px;">Ant Build</span>
<svg style="position:absolute;left:1891px;top:254px" width="18" height="18" viewBox="0 0 18 18"><g fill="#3a9bcf"><ellipse cx="9" cy="3" rx="8" ry="2.5"/><path d="M1 5c2 2.5 14 2.5 16 0v2.5c-2 2.500-14 2.500-16 0z"/><path d="M1 9c2 2.5 14 2.5 16 0v2.5c-2 2.500-14 2.500-16 0z"/><path d="M1 13c2 2.5 14 2.5 16 0v2.5c-2 2.500-14 2.500-16 0z"/></g></svg>
<span class="t vt" style="left:1910px;top:274.4px;height:20px;line-height:20px;transform:rotate(90deg);transform-origin:0 0;color:#bbbbbb;letter-spacing:-0.007px;">Database</span>
<svg style="position:absolute;left:1890px;top:364px" width="19" height="18" viewBox="0 0 19 18"><text x="0" y="15" font-family="Liberation Sans,sans-serif" font-style="italic" font-weight="bold" font-size="21" fill="#3d8fb5" textLength="18" lengthAdjust="spacingAndGlyphs">m</text></svg>
<span class="t vt" style="left:1910px;top:385px;height:20px;line-height:20px;transform:rotate(90deg);transform-origin:0 0;color:#bbbbbb;letter-spacing:0.356px;">Maven Projects</span>
<div style="position:absolute;left:1px;top:973px;width:1914px;height:1px;background:#2b2b2b;"></div>
<div style="position:absolute;left:1px;top:974px;width:1914px;height:1px;background:#555555;"></div>
<div style="position:absolute;left:1px;top:975px;width:1914px;height:27px;background:#3c3f41;"></div>
<svg style="position:absolute;left:41px;top:978px" width="20" height="20" viewBox="41 978 20 20"><path d="M45.300 985.600L45.800 981.500Q46.200 979.900 48 979.900L54.300 979.900Q56.300 979.900 56.600 981.500L57 985.600Z" fill="#8e8e8e"/><rect x="42.900" y="985.200" width="16" height="1.900" rx="0.900" fill="#858585"/><rect x="49.800" y="983" width="2.400" height="2.500" fill="#f5b544"/><path d="M44 989.500L45.200 987.100L56.800 987.100L58.200 989.500L56.500 993L54.500 995L51 996L47.500 995L45.500 993Z" fill="#f0b95a"/><rect x="48.400" y="987.100" width="1.900" height="1.300" fill="#3a3a3a"/><rect x="52.100" y="987.100" width="2" height="1.300" fill="#3a3a3a"/><path d="M47.200 991.800Q51 988.900 55 991.800" stroke="#9a6a1e" stroke-width="1.200" fill="none"/><path d="M45.600 995.300L48.300 994.600L51 996L53.700 994.600L56.400 995.300L56.400 996.300L45.600 996.300Z" fill="#8f8f8f"/></svg>
<span class="t s14" style="top:979.0px;height:20px;line-height:20px;left:63px;letter-spacing:0.377px;">Inspection Results</span>
<svg style="position:absolute;left:210px;top:978px" width="20" height="20" viewBox="210 978 20 20"><path d="M216.800 988.200L218 986L228 986L228 993.600L219 993.600L217.200 991Z" fill="#f5c97a"/><path d="M220.500 986L221.600 983.200L228 983.200L228 986Z" fill="#8e8e8e"/><circle cx="220.300" cy="989.300" r="0.700" fill="#4a3a2a"/><circle cx="224.200" cy="989.300" r="0.700" fill="#4a3a2a"/><rect x="217.700" y="993.600" width="10.300" height="2.100" fill="#3a9fe0"/><circle cx="216.200" cy="984.200" r="4.100" fill="#ffffff"/><path d="M214.400 982.800h3.600M214.400 985.600h3.600" stroke="#4a4a4a" stroke-width="1"/></svg>
<svg style="position:absolute;left:1783px;top:979px" width="22" height="20" viewBox="0 0 22 20"><ellipse cx="10.500" cy="8.500" rx="9" ry="7.600" fill="none" stroke="#85888a" stroke-width="1.300"/><path d="M13.500 15.200l6 2.800l-2.600-5" fill="#3c3f41" stroke="#85888a" stroke-width="1.300"/></svg>
<span class="t s14" style="top:979.0px;height:20px;line-height:20px;left:1808px;letter-spacing:0.228px;">Event Log</span>
<div style="position:absolute;left:1px;top:1002px;width:1914px;height:1px;background:#4b4b4b;"></div>
<div style="position:absolute;left:1px;top:1003px;width:1914px;height:26px;background:#3c3f41;"></div>
<svg style="position:absolute;left:9px;top:1006px" width="20" height="20" viewBox="0 0 20 20"><rect x="2.700" y="1.700" width="16.500" height="14" fill="#5a5d5f" stroke="#9a9da0" stroke-width="1.400"/><path d="M2 17.800h18" stroke="#9a9da0" stroke-width="1.600"/></svg>
<span class="t " style="top:1007.0px;height:20px;line-height:20px;left:1712px;letter-spacing:0.513px;">3:23</span>
<span class="t " style="top:1007.0px;height:20px;line-height:20px;left:1757px;letter-spacing:-0.344px;">LF</span>
<span class="t " style="top:1007.0px;height:20px;line-height:20px;left:1794px;letter-spacing:0.333px;">UTF-8</span>
<svg style="position:absolute;left:1775px;top:1011px" width="7" height="11"><path d="M0.5 4l3-3.5l3 3.5zM0.5 7l3 3.5l3-3.5z" fill="#aaa"/></svg>
<svg style="position:absolute;left:1838.5px;top:1011px" width="7" height="11"><path d="M0.5 4l3-3.5l3 3.5zM0.5 7l3 3.5l3-3.5z" fill="#aaa"/></svg>
<svg style="position:absolute;left:1859px;top:1010px" width="14" height="14" viewBox="0 0 14 14"><path d="M1.700 6v-2a2.300 2.300 0 0 1 4.600 0v1.500" fill="none" stroke="#9c9c9c" stroke-width="1.500"/><rect x="4" y="5.500" width="9" height="6.800" fill="#9c9c9c"/><rect x="7.600" y="7.500" width="1.800" height="2.600" fill="#3c3f41"/></svg>
<svg style="position:absolute;left:1889px;top:1007px" width="18" height="20" viewBox="0 0 18 20"><path d="M4 9.500l0.600-5q0.200-1.500 1.700-1.500h5.400q1.500 0 1.700 1.500l0.600 5z" fill="#8a8a8a"/><rect x="0.800" y="8.300" width="16.400" height="1.700" rx="0.800" fill="#8a8a8a"/><rect x="7.600" y="4.500" width="2.800" height="2.600" fill="#3c3f41"/><path d="M4 10.500v2.500l2 3.300h6l2-3.300v-2.500" fill="none" stroke="#8a8a8a" stroke-width="1.500"/><rect x="5.300" y="10.800" width="2.600" height="1.400" fill="#8a8a8a"/><rect x="10.100" y="10.800" width="2.600" height="1.400" fill="#8a8a8a"/><path d="M6.500 15q2.500-2 5 0" stroke="#8a8a8a" stroke-width="1.200" fill="none"/><path d="M3.500 19.500l2.500-3M14.500 19.500l-2.500-3" stroke="#8a8a8a" stroke-width="1.500"/></svg>
<div style="position:absolute;left:0px;top:1029px;width:1916px;height:1px;background:#1883d7;"></div>
<div style="position:absolute;left:227px;top:54px;width:391px;height:977px;background:#3c3f41;border-left:1px solid #515151;border-top:1px solid #515151;border-right:1px solid #515151;box-sizing:border-box;"></div>
<span class="t " style="top:58.5px;height:20px;line-height:20px;left:258px;letter-spacing:1.194px;">New</span>
<svg style="position:absolute;left:598px;top:62px" width="7" height="11"><path d="M0 0l6.5 5.5l-6.5 5.5z" fill="#b0b0b0"/></svg>
<span class="t " style="top:85.5px;height:20px;line-height:20px;left:258px;letter-spacing:0.678px;">Add Framework Support...</span>
<div style="position:absolute;left:228px;top:110px;width:389px;height:1px;background:#515151;"></div>
<svg style="position:absolute;left:232px;top:116px" width="20" height="20" viewBox="0 0 20 20"><path d="M4 1l6.3 11M16 1l-6.3 11" stroke="#9aa7b0" stroke-width="1.4" fill="none"/><circle cx="5.5" cy="15.5" r="2.6" fill="none" stroke="#b07fd0" stroke-width="2"/><circle cx="14.5" cy="15.5" r="2.6" fill="none" stroke="#b07fd0" stroke-width="2"/><rect x="9" y="10" width="2" height="2.5" fill="#9aa7b0"/></svg>
<span class="t " style="top:116.5px;height:20px;line-height:20px;left:258px;letter-spacing:0.656px;">Cu<u>t</u></span>
<span class="t " style="top:116.5px;height:20px;line-height:20px;right:1313px;letter-spacing:0.892px;margin-right:-0.892px;">Ctrl+X</span>
<svg style="position:absolute;left:232px;top:143px" width="20" height="20" viewBox="0 0 20 20"><path d="M7.800 2h6.200l3.500 3.500v10.500h-9.700z" fill="#3c3f41" stroke="#8c8c8c" stroke-width="1.800"/><path d="M13.800 2v3.800h3.700" fill="none" stroke="#8c8c8c" stroke-width="1.400"/><path d="M2 4.500h7l3.500 3.500v10.500h-10.500z" fill="#3c3f41" stroke="#4a8db8" stroke-width="2"/><path d="M8.700 4.500v4h3.800" fill="none" stroke="#4a8db8" stroke-width="1.500"/></svg>
<span class="t " style="top:143.5px;height:20px;line-height:20px;left:258px;letter-spacing:0.848px;"><u>C</u>opy</span>
<span class="t " style="top:143.5px;height:20px;line-height:20px;right:1313px;letter-spacing:0.741px;margin-right:-0.741px;">Ctrl+C</span>
<span class="t " style="top:170.5px;height:20px;line-height:20px;left:258px;letter-spacing:0.463px;">C<u>o</u>py Path</span>
<span class="t " style="top:170.5px;height:20px;line-height:20px;right:1313px;letter-spacing:0.808px;margin-right:-0.808px;">Ctrl+Shift+C</span>
<span class="t " style="top:197.5px;height:20px;line-height:20px;left:258px;letter-spacing:0.402px;">Copy as Plain Text</span>
<span class="t " style="top:224.5px;height:20px;line-height:20px;left:258px;letter-spacing:0.433px;">Cop<u>y</u> Relative Path</span>
<span class="t " style="top:224.5px;height:20px;line-height:20px;right:1313px;letter-spacing:0.970px;margin-right:-0.970px;">Ctrl+Alt+Shift+C</span>
<svg style="position:absolute;left:232px;top:251px" width="20" height="20" viewBox="0 0 20 20"><rect x="6" y="2.500" width="12.500" height="13.500" fill="#d09a4c"/><rect x="9.500" y="0.800" width="5.500" height="3" fill="#9a9a9a"/><path d="M2 7h6l3 3v8.500h-9z" fill="#3c3f41" stroke="#8f8f8f" stroke-width="2"/><path d="M7.500 7v3.500h3.500" fill="none" stroke="#8f8f8f" stroke-width="1.400"/></svg>
<span class="t " style="top:251.5px;height:20px;line-height:20px;left:258px;letter-spacing:0.139px;"><u>P</u>aste</span>
<span class="t " style="top:251.5px;height:20px;line-height:20px;right:1313px;letter-spacing:0.892px;margin-right:-0.892px;">Ctrl+V</span>
<div style="position:absolute;left:228px;top:276px;width:389px;height:1px;background:#515151;"></div>
<span class="t " style="top:282.5px;height:20px;line-height:20px;left:258px;letter-spacing:0.263px;">Find <u>U</u>sages</span>
<span class="t " style="top:282.5px;height:20px;line-height:20px;right:1313px;letter-spacing:0.949px;margin-right:-0.949px;">Alt+F7</span>
<span class="t " style="top:309.5px;height:20px;line-height:20px;left:258px;letter-spacing:0.236px;">Find in <u>P</u>ath...</span>
<span class="t " style="top:309.5px;height:20px;line-height:20px;right:1313px;letter-spacing:0.780px;margin-right:-0.780px;">Ctrl+Shift+F</span>
<span class="t " style="top:336.5px;height:20px;line-height:20px;left:258px;letter-spacing:0.262px;">Repl<u>a</u>ce in Path...</span>
<span class="t " style="top:336.5px;height:20px;line-height:20px;right:1313px;letter-spacing:0.808px;margin-right:-0.808px;">Ctrl+Shift+R</span>
<span class="t " style="top:363.5px;height:20px;line-height:20px;left:258px;letter-spacing:0.404px;">Analy<u>z</u>e</span>
<svg style="position:absolute;left:598px;top:367px" width="7" height="11"><path d="M0 0l6.5 5.5l-6.5 5.5z" fill="#b0b0b0"/></svg>
<div style="position:absolute;left:228px;top:388px;width:389px;height:1px;background:#515151;"></div>
<span class="t " style="top:394.5px;height:20px;line-height:20px;left:258px;letter-spacing:0.706px;"><u>R</u>efactor</span>
<svg style="position:absolute;left:598px;top:398px" width="7" height="11"><path d="M0 0l6.5 5.5l-6.5 5.5z" fill="#b0b0b0"/></svg>
<div style="position:absolute;left:228px;top:419px;width:389px;height:1px;background:#515151;"></div>
<span class="t " style="top:425.5px;height:20px;line-height:20px;left:258px;letter-spacing:0.759px;">Add to F<u>a</u>vorites</span>
<svg style="position:absolute;left:598px;top:429px" width="7" height="11"><path d="M0 0l6.5 5.5l-6.5 5.5z" fill="#b0b0b0"/></svg>
<span class="t " style="top:452.5px;height:20px;line-height:20px;left:258px;letter-spacing:0.546px;">Show Image Thumbnails</span>
<span class="t " style="top:452.5px;height:20px;line-height:20px;right:1313px;letter-spacing:0.867px;margin-right:-0.867px;">Ctrl+Shift+T</span>
<div style="position:absolute;left:228px;top:477px;width:389px;height:1px;background:#515151;"></div>
<span class="t " style="top:483.5px;height:20px;line-height:20px;left:258px;letter-spacing:0.741px;"><u>R</u>eformat Code</span>
<span class="t " style="top:483.5px;height:20px;line-height:20px;right:1313px;letter-spacing:1.084px;margin-right:-1.084px;">Ctrl+Alt+L</span>
<span class="t " style="top:510.5px;height:20px;line-height:20px;left:258px;letter-spacing:0.879px;">Optimi<u>z</u>e Imports</span>
<span class="t " style="top:510.5px;height:20px;line-height:20px;right:1313px;letter-spacing:1.155px;margin-right:-1.155px;">Ctrl+Alt+O</span>
<span class="t " style="top:537.5px;height:20px;line-height:20px;left:258px;letter-spacing:0.943px;">Remove Module</span>
<span class="t " style="top:537.5px;height:20px;line-height:20px;right:1313px;letter-spacing:0.662px;margin-right:-0.662px;">Delete</span>
<div style="position:absolute;left:228px;top:562px;width:389px;height:1px;background:#515151;"></div>
<svg style="position:absolute;left:233px;top:569px" width="18" height="18" viewBox="0 0 18 18"><g fill="#3a8ba8"><circle cx="9" cy="9" r="6.600"/><rect x="7.300" y="0.200" width="3.400" height="17.600"/><rect x="0.200" y="7.300" width="17.600" height="3.400"/><g transform="rotate(45 9 9)"><rect x="7.300" y="0.200" width="3.400" height="17.600"/><rect x="0.200" y="7.300" width="17.600" height="3.400"/></g></g><circle cx="9" cy="9" r="2.500" fill="#3c3f41"/></svg>
<span class="t " style="top:568.5px;height:20px;line-height:20px;left:258px;letter-spacing:0.504px;">Run Maven</span>
<svg style="position:absolute;left:598px;top:572px" width="7" height="11"><path d="M0 0l6.5 5.5l-6.5 5.5z" fill="#b0b0b0"/></svg>
<svg style="position:absolute;left:233px;top:596px" width="18" height="18" viewBox="0 0 18 18"><g fill="#1ea51e"><circle cx="9" cy="9" r="5.800"/><rect x="7.600" y="1.200" width="2.800" height="15.600"/><rect x="1.200" y="7.600" width="15.600" height="2.800"/><g transform="rotate(45 9 9)"><rect x="7.600" y="1.200" width="2.800" height="15.600"/><rect x="1.200" y="7.600" width="15.600" height="2.800"/></g></g><circle cx="9" cy="9" r="2.300" fill="#3c3f41"/></svg>
<span class="t " style="top:595.5px;height:20px;line-height:20px;left:258px;letter-spacing:0.818px;">Debug Maven</span>
<svg style="position:absolute;left:598px;top:599px" width="7" height="11"><path d="M0 0l6.5 5.5l-6.5 5.5z" fill="#b0b0b0"/></svg>
<div style="position:absolute;left:228px;top:620px;width:389px;height:1px;background:#515151;"></div>
<span class="t " style="top:626.5px;height:20px;line-height:20px;left:258px;letter-spacing:0.934px;">Build <u>M</u>odule &#x27;hello-world&#x27;</span>
<span class="t " style="top:653.5px;height:20px;line-height:20px;left:258px;letter-spacing:0.957px;">R<u>e</u>build Module &#x27;hello-world&#x27;</span>
<span class="t " style="top:653.5px;height:20px;line-height:20px;right:1313px;letter-spacing:0.770px;margin-right:-0.770px;">Ctrl+Shift+F9</span>
<div style="position:absolute;left:228px;top:678px;width:389px;height:1px;background:#515151;"></div>
<span class="t " style="top:684.5px;height:20px;line-height:20px;left:258px;letter-spacing:0.662px;">Local <u>H</u>istory</span>
<svg style="position:absolute;left:598px;top:688px" width="7" height="11"><path d="M0 0l6.5 5.5l-6.5 5.5z" fill="#b0b0b0"/></svg>
<svg style="position:absolute;left:232px;top:712px" width="19" height="19" viewBox="0 0 19 19"><path d="M10 2.300a7.200 7.200 0 0 0-6 11.500" fill="none" stroke="#3f9ad6" stroke-width="2.600"/><path d="M9 16.700a7.200 7.200 0 0 0 6-11.500" fill="none" stroke="#3f9ad6" stroke-width="2.600"/><path d="M0.500 11.500l7 0.200l-3.400 6.300z" fill="#3f9ad6"/><path d="M18.500 7.500l-7-0.200l3.400-6.300z" fill="#3f9ad6"/><path d="M13 1.500l-7 16" stroke="#3f9ad6" stroke-width="1.600"/></svg>
<span class="t " style="top:711.5px;height:20px;line-height:20px;left:258px;letter-spacing:0.776px;">Synchronize &#x27;hello-world&#x27;</span>
<div style="position:absolute;left:228px;top:736px;width:389px;height:1px;background:#515151;"></div>
<span class="t " style="top:742.5px;height:20px;line-height:20px;left:258px;letter-spacing:0.555px;">Show in Explorer</span>
<span class="t " style="top:769.5px;height:20px;line-height:20px;left:258px;letter-spacing:0.662px;">Directory <u>P</u>ath</span>
<span class="t " style="top:769.5px;height:20px;line-height:20px;right:1313px;letter-spacing:0.939px;margin-right:-0.939px;">Ctrl+Alt+F12</span>
<div style="position:absolute;left:228px;top:794px;width:389px;height:1px;background:#515151;"></div>
<svg style="position:absolute;left:233px;top:801px" width="18" height="18" viewBox="0 0 18 18"><rect x="0.5" y="5" width="8" height="12.5" fill="#9aa0a4"/><rect x="9.5" y="5" width="8" height="12.5" fill="#3592c4"/><rect x="2.5" y="7" width="4" height="8" fill="#55585a"/><rect x="11.5" y="7" width="4" height="8" fill="#1f5f86"/><path d="M4.5 6a4.5 4.5 0 0 1 9 0" fill="none" stroke="#c8ccd0" stroke-width="1.5"/><path d="M2 4.5l2.5 3l2.5-3zM11 4.5l2.5 3l2.5-3z" fill="#c8ccd0"/><rect x="0.5" y="15.5" width="8" height="2" fill="#7a8084"/></svg>
<span class="t " style="top:800.5px;height:20px;line-height:20px;left:258px;letter-spacing:0.595px;">Compare With...</span>
<span class="t " style="top:800.5px;height:20px;line-height:20px;right:1313px;letter-spacing:0.923px;margin-right:-0.923px;">Ctrl+D</span>
<div style="position:absolute;left:228px;top:825px;width:389px;height:1px;background:#515151;"></div>
<span class="t " style="top:831.5px;height:20px;line-height:20px;left:258px;letter-spacing:0.849px;">Open Module Settings</span>
<span class="t " style="top:831.5px;height:20px;line-height:20px;right:1313px;letter-spacing:-0.344px;margin-right:0.344px;">F4</span>
<span class="t " style="top:858.5px;height:20px;line-height:20px;left:258px;letter-spacing:0.996px;">Move Module to Group</span>
<svg style="position:absolute;left:598px;top:862px" width="7" height="11"><path d="M0 0l6.5 5.5l-6.5 5.5z" fill="#b0b0b0"/></svg>
<span class="t " style="top:885.5px;height:20px;line-height:20px;left:258px;letter-spacing:0.634px;">Mark Directory as</span>
<svg style="position:absolute;left:598px;top:889px" width="7" height="11"><path d="M0 0l6.5 5.5l-6.5 5.5z" fill="#b0b0b0"/></svg>
<div style="position:absolute;left:228px;top:910px;width:389px;height:1px;background:#515151;"></div>
<svg style="position:absolute;left:233px;top:917px" width="18" height="18" viewBox="0 0 18 18"><rect x="0" y="0" width="4.5" height="4.5" fill="#1ea51e"/><rect x="12.5" y="0.5" width="5.5" height="5.5" fill="#c9975a"/><rect x="0" y="12" width="5.5" height="5.5" fill="#c9975a"/><rect x="13.5" y="13.5" width="4.5" height="4.5" fill="#1ea51e"/><path d="M6 2.5h6M2.5 6v5M7 15.5h6M15.5 7v6" stroke="#8a9196" stroke-width="1.2" stroke-dasharray="1.5 1.5"/><path d="M6.5 11.5l5-5M8.5 6.5h3v3" stroke="#9aa0a4" stroke-width="1.2" fill="none"/></svg>
<span class="t " style="top:916.5px;height:20px;line-height:20px;left:258px;letter-spacing:0.508px;">Diagrams</span>
<svg style="position:absolute;left:598px;top:920px" width="7" height="11"><path d="M0 0l6.5 5.5l-6.5 5.5z" fill="#b0b0b0"/></svg>
<svg style="position:absolute;left:232px;top:943px" width="20" height="20" viewBox="0 0 20 20"><g transform="translate(-839,-75)"><rect x="840.900" y="76.900" width="16.300" height="16.100" rx="2.600" fill="none" stroke="#14a514" stroke-width="1.800"/><path d="M842.800 84.200l1.300-0.200l1.100-4l1.100 1.800l1.400 6.600l1.600-5.300l1.200 1.200l1.200 2.700l1-2.400l1.200 0.300l0.800-1.500h1" fill="none" stroke="#14a514" stroke-width="1.500" stroke-linejoin="round"/></g></svg>
<span class="t " style="top:943.5px;height:20px;line-height:20px;left:258px;letter-spacing:-0.003px;font-weight:300;">编码规约扫描</span>
<span class="t " style="top:943.5px;height:20px;line-height:20px;right:1313px;letter-spacing:0.926px;margin-right:-0.926px;">Ctrl+Alt+Shift+J</span>
<svg style="position:absolute;left:232px;top:970px" width="20" height="20" viewBox="0 0 20 20"><circle cx="10" cy="10" r="8.2" fill="none" stroke="#1296db" stroke-width="1.9"/><path d="M4.3 15.7l11.4-11.4" stroke="#1296db" stroke-width="1.9"/></svg>
<span class="t " style="top:970.5px;height:20px;line-height:20px;left:258px;letter-spacing:-0.002px;font-weight:300;">关闭实时检测功能</span>
<svg style="position:absolute;left:232px;top:998px" width="19" height="18" viewBox="0 0 19 18"><text x="0.400" y="15.300" font-family="Liberation Sans,sans-serif" font-style="italic" font-weight="bold" font-size="22" fill="#3d8fb5" textLength="17.600" lengthAdjust="spacingAndGlyphs">m</text></svg>
<span class="t " style="top:997.5px;height:20px;line-height:20px;left:258px;letter-spacing:0.882px;">Maven</span>
<svg style="position:absolute;left:598px;top:1001px" width="7" height="11"><path d="M0 0l6.5 5.5l-6.5 5.5z" fill="#b0b0b0"/></svg>
<svg style="position:absolute;left:233px;top:1025px" width="18" height="18" viewBox="0 0 18 18"><circle cx="9" cy="9" r="9" fill="#e8e8e8"/><path d="M4 6l1-3l3 2h2l3-2l1 3v5l-3 3h-4l-3-3z" fill="#222"/></svg>
<span class="t " style="top:1024.5px;height:20px;line-height:20px;left:258px;letter-spacing:0.122px;">Create Gist...</span>
<div style="position:absolute;left:221px;top:937px;width:399px;height:58px;border:3px solid #f93a3a"></div>
<div style="position:absolute;left:1915px;top:0px;width:1px;height:1030px;background:#1883d7;"></div>
<div style="position:absolute;left:0px;top:0px;width:1px;height:1030px;background:#1883d7;"></div>
</div></body></html>
